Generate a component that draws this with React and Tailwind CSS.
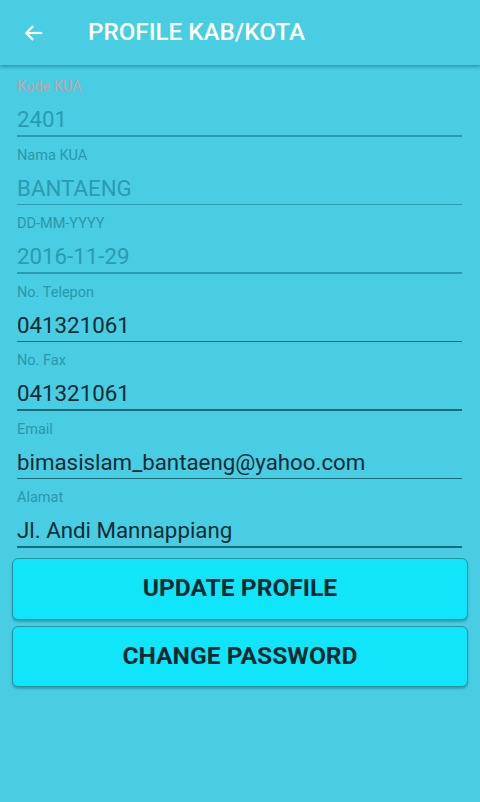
import React from "react";

const fields = [
  { label: "Kode KUA", value: "2401", disabled: true, pink: true },
  { label: "Nama KUA", value: "BANTAENG", disabled: true },
  { label: "DD-MM-YYYY", value: "2016-11-29", disabled: true },
  { label: "No. Telepon", value: "041321061" },
  { label: "No. Fax", value: "041321061" },
  { label: "Email", value: "bimasislam_bantaeng@yahoo.com" },
  { label: "Alamat", value: "Jl. Andi Mannappiang" },
];

function Field({ label, value, disabled, pink }) {
  return (
    <div className="h-[68.5px] flex flex-col px-[17px]">
      <div
        className={
          "mt-[10px] h-[17px] leading-[17px] text-[14.5px] " +
          (pink ? "text-[#c3a3ac]" : "text-[#2b98aa]")
        }
      >
        {label}
      </div>
      <div
        className={
          "mt-[10px] h-[28px] leading-[28px] text-[22.3px] " +
          (disabled ? "text-[#2c9bb0]" : "text-[#0f2c35]")
        }
      >
        {value}
      </div>
      <div
        className={
          "mt-[2px] h-[1.5px] mr-[1px] " +
          (disabled ? "bg-[#2b9cb0]" : "bg-[#1d6a78]")
        }
      />
    </div>
  );
}

export default function App() {
  return (
    <div
      className="w-[480px] h-[802px] bg-[#48cde2] overflow-hidden"
      style={{ fontFamily: "Roboto, 'Noto Sans', sans-serif" }}
    >
      <div className="relative h-[65px] bg-[#48cde2] flex items-center shadow-[0_2px_3px_rgba(0,60,80,0.35)] z-10">
        <svg
          className="ml-[23px]"
          width="22"
          height="22"
          viewBox="0 0 24 24"
          fill="none"
          stroke="white"
          strokeWidth="2.4"
        >
          <path d="M21 12H4" />
          <path d="M11 4.5 3.5 12 11 19.5" />
        </svg>
        <div className="ml-[43px] text-white text-[24.2px] font-medium">
          PROFILE KAB/KOTA
        </div>
      </div>
      <div className="pt-[3px]">
        {fields.map((f) => (
          <Field key={f.label} {...f} />
        ))}
      </div>
      <div className="px-[12px] mt-[10px] flex flex-col gap-[6px]">
        <button className="h-[62px] w-full rounded-[6px] bg-[#10e5f9] border border-[#2a93a3] shadow-[0_2px_2px_rgba(0,60,80,0.3)] text-[24.6px] font-bold text-[#0d2a31]">
          UPDATE PROFILE
        </button>
        <button className="h-[61px] w-full rounded-[6px] bg-[#10e5f9] border border-[#2a93a3] shadow-[0_2px_2px_rgba(0,60,80,0.3)] text-[24.6px] font-bold text-[#0d2a31]">
          CHANGE PASSWORD
        </button>
      </div>
    </div>
  );
}
